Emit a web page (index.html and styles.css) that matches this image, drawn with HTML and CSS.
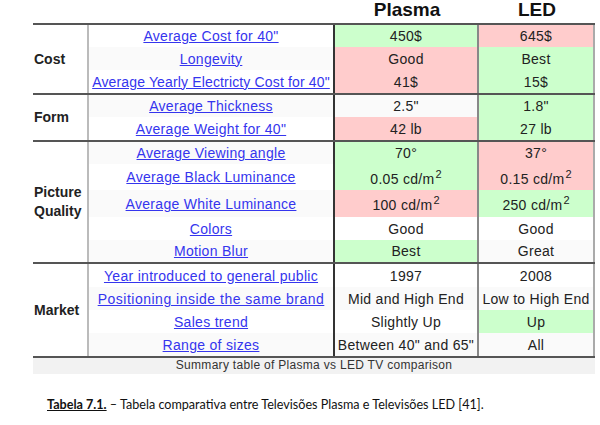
FILE: index.html
```html
<!DOCTYPE html>
<html lang="pt">
<head>
<meta charset="utf-8">
<title>Plasma vs LED</title>
<link rel="stylesheet" href="styles.css">
</head>
<body>
<div class="page">
  <div class="tbl">
    <div class="head">
      <div class="head-spacer"></div>
      <div class="head-cell">Plasma</div>
      <div class="head-cell led">LED</div>
    </div>

    <div class="group">
      <div class="cat">Cost</div>
      <div class="rows">
        <div class="row h22"><div class="feat"><a href="#">Average Cost for 40"</a></div><div class="val good">450$</div><div class="val led bad">645$</div></div>
        <div class="row alt"><div class="feat"><a href="#">Longevity</a></div><div class="val bad">Good</div><div class="val led good">Best</div></div>
        <div class="row"><div class="feat"><a href="#" class="tight">Average Yearly Electricty Cost for 40"</a></div><div class="val bad">41$</div><div class="val led good">15$</div></div>
      </div>
    </div>

    <div class="group">
      <div class="cat">Form</div>
      <div class="rows">
        <div class="row h22 alt"><div class="feat"><a href="#">Average Thickness</a></div><div class="val">2.5"</div><div class="val led good">1.8"</div></div>
        <div class="row"><div class="feat"><a href="#">Average Weight for 40"</a></div><div class="val bad">42 lb</div><div class="val led good">27 lb</div></div>
      </div>
    </div>

    <div class="group">
      <div class="cat">Picture Quality</div>
      <div class="rows">
        <div class="row h22 alt"><div class="feat"><a href="#">Average Viewing angle</a></div><div class="val good">70°</div><div class="val led bad">37°</div></div>
        <div class="row h26"><div class="feat"><a href="#">Average Black Luminance</a></div><div class="val good"><span>0.05 cd/m<sup>2</sup></span></div><div class="val led bad"><span>0.15 cd/m<sup>2</sup></span></div></div>
        <div class="row h27 alt"><div class="feat"><a href="#">Average White Luminance</a></div><div class="val bad"><span>100 cd/m<sup>2</sup></span></div><div class="val led good"><span>250 cd/m<sup>2</sup></span></div></div>
        <div class="row"><div class="feat"><a href="#">Colors</a></div><div class="val">Good</div><div class="val led">Good</div></div>
        <div class="row h22 alt"><div class="feat"><a href="#">Motion Blur</a></div><div class="val good">Best</div><div class="val led">Great</div></div>
      </div>
    </div>

    <div class="group">
      <div class="cat">Market</div>
      <div class="rows">
        <div class="row"><div class="feat"><a href="#">Year introduced to general public</a></div><div class="val">1997</div><div class="val led">2008</div></div>
        <div class="row alt"><div class="feat"><a href="#" class="wide">Positioning inside the same brand</a></div><div class="val">Mid and High End</div><div class="val led">Low to High End</div></div>
        <div class="row"><div class="feat"><a href="#">Sales trend</a></div><div class="val">Slightly Up</div><div class="val led good">Up</div></div>
        <div class="row alt"><div class="feat"><a href="#">Range of sizes</a></div><div class="val">Between 40" and 65"</div><div class="val led">All</div></div>
      </div>
    </div>

    <div class="summary">Summary table of Plasma vs LED TV comparison</div>
  </div>

  <p class="caption"><span class="lbl">Tabela 7.1.</span> – Tabela comparativa entre Televisões Plasma e Televisões LED [41].</p>
</div>
</body>
</html>
```

FILE: styles.css
```css
* { box-sizing: border-box; }

body {
  margin: 0;
  background: #ffffff;
  font-family: "Liberation Sans", Arial, sans-serif;
  color: #222222;
}

.page {
  padding-left: 33px;
}

.tbl {
  width: 562px;
}

.head {
  display: flex;
  height: 25px;
  border-bottom: 2px solid #555555;
}

.head-spacer {
  width: 302px;
}

.head-cell {
  width: 144px;
  text-align: center;
  font-weight: bold;
  font-size: 19px;
  line-height: 20px;
  color: #111111;
}

.head-cell.led {
  width: 116px;
}

.group {
  display: flex;
  border-bottom: 2px solid #555555;
}

.cat {
  width: 56px;
  border-right: 2px solid #bbbbbb;
  display: flex;
  align-items: center;
  padding-left: 1px;
  font-weight: bold;
  font-size: 14px;
  line-height: 19px;
  color: #222222;
}

.rows {
  width: 506px;
}

.row {
  display: flex;
  height: 23px;
  font-size: 14px;
  letter-spacing: 0.3px;
}

.row.h22 { height: 22px; }
.row.h26 { height: 26px; }
.row.h27 { height: 27px; }

.feat,
.val {
  display: flex;
  align-items: center;
  justify-content: center;
  white-space: nowrap;
}

.feat {
  width: 246px;
  border-right: 2px solid #333333;
}

.feat a {
  color: #3535ee;
  text-decoration: underline;
}

.feat a.tight {
  letter-spacing: 0.15px;
}

.feat a.wide {
  letter-spacing: 0.5px;
}

.val {
  width: 144px;
  border-right: 2px solid #888888;
  color: #222222;
}

.val.led {
  width: 116px;
  border-right-color: #aaaaaa;
}

.val span {
  line-height: 16px;
  padding-top: 3px;
}

.row.alt .feat,
.row.alt .val {
  background: #fafafa;
}

.row .val.good { background: #ccffcc; }
.row .val.bad { background: #ffcccc; }

.val sup {
  font-size: 11px;
  line-height: 0;
  position: relative;
  top: -6px;
  vertical-align: baseline;
  letter-spacing: 0;
  margin-left: 1px;
}

.summary {
  height: 16px;
  background: #f2f2f2;
  text-align: center;
  font-size: 12px;
  line-height: 15px;
  letter-spacing: 0.3px;
  color: #333333;
}

.caption {
  margin: 23px 0 0 0;
  padding-left: 14px;
  font-family: Lato, "Liberation Sans", sans-serif;
  font-size: 12.6px;
  line-height: 16px;
  color: #111111;
}

.caption .lbl {
  font-weight: bold;
  text-decoration: underline;
}
```
